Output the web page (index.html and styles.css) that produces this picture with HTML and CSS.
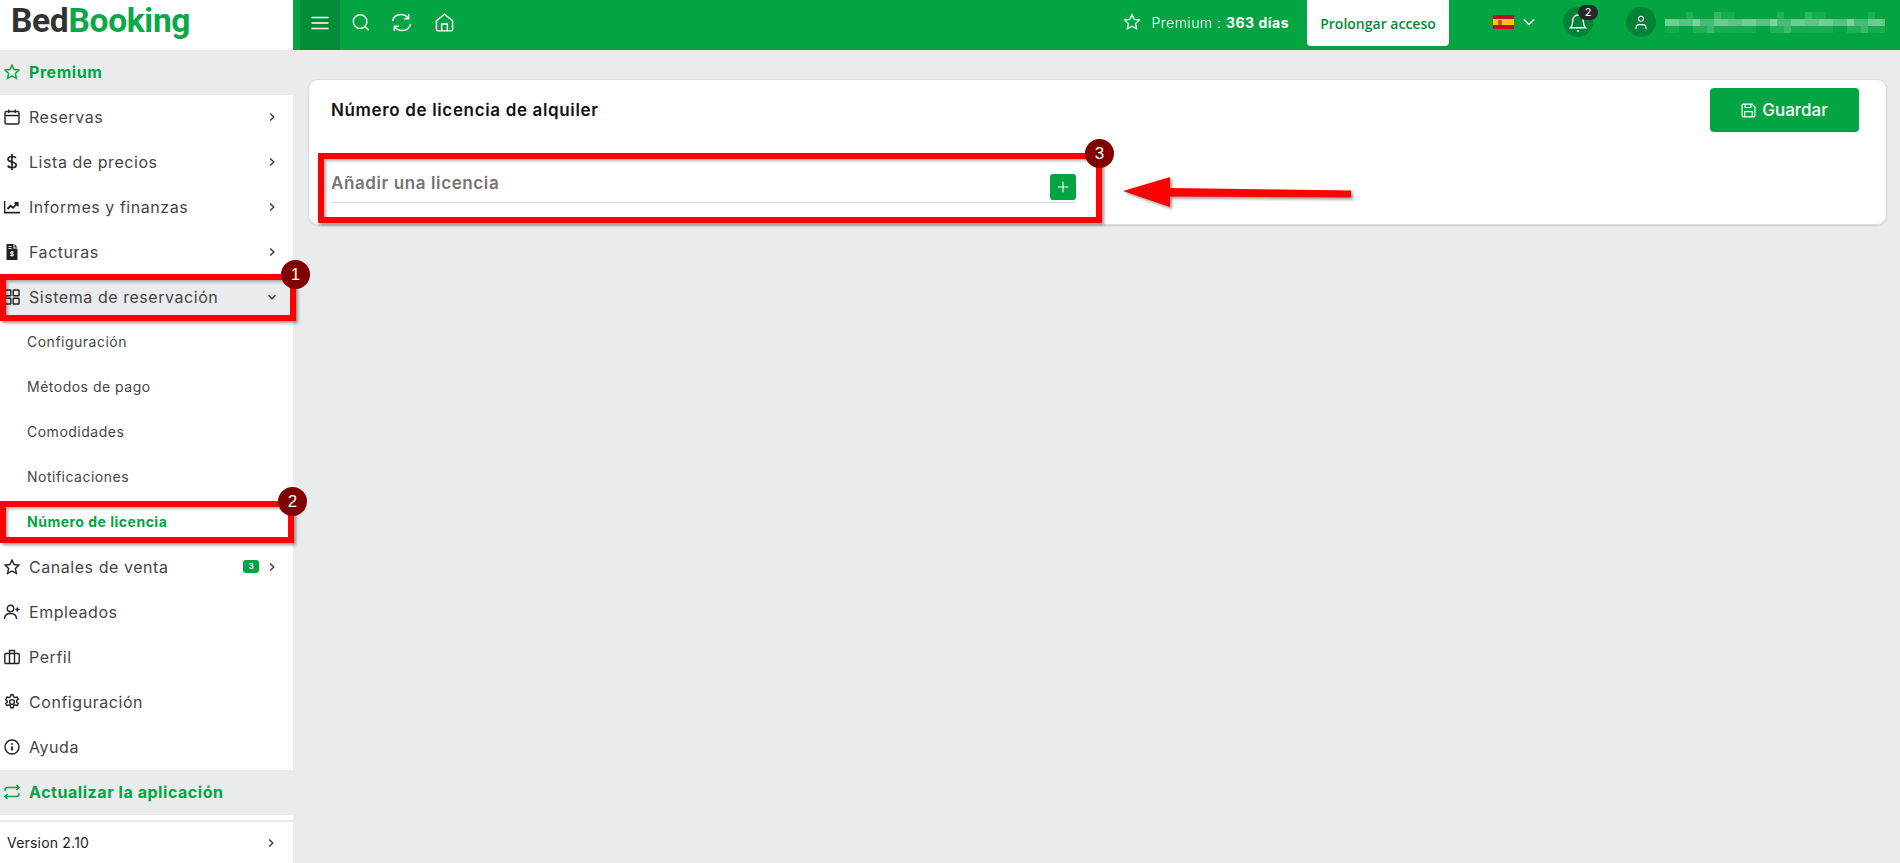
FILE: index.html
```html
<!DOCTYPE html>
<html lang="es">

<head>
    <meta charset="UTF-8">
    <title>BedBooking - Número de licencia</title>
    <link rel="stylesheet" href="styles.css">
</head>

<body>
    <div class="layout">
        <!-- Sidebar -->
        <aside class="sidebar">
            <div class="logo"><span class="logo-dark">Bed</span><span class="logo-green">Booking</span></div>

            <nav class="menu">
                <a class="menu-item menu-highlight">
                    <svg class="menu-icon" viewBox="0 0 16 16"><path d="M8 1l2.100 4.500 4.900.6-3.600 3.400 1 4.900L8 12l-4.400 2.400 1-4.900L1 6.100l4.900-.6z"/></svg>
                    <span class="menu-label">Premium</span>
                </a>
                <a class="menu-item">
                    <svg class="menu-icon" viewBox="0 0 16 16"><rect x="1" y="2.500" width="14" height="12.500" rx="1.500"/><path d="M1 6.500h14M4.800 .5v3.500M11.200 .5v3.500"/></svg>
                    <span class="menu-label">Reservas</span>
                    <svg class="chevron" viewBox="0 0 10 10"><path d="M3.200 1.500L6.800 5 3.200 8.500"/></svg>
                </a>
                <a class="menu-item">
                    <svg class="menu-icon" viewBox="0 0 16 16"><path stroke-width="1.700" d="M8 0v16M12 4.200C11.400 3 10 2.500 8 2.500c-2.300 0-4 .9-4 2.800S5.700 7.500 8 8s4.200 1 4.200 2.900-1.900 2.700-4.200 2.700c-2 0-3.700-.6-4.300-2"/></svg>
                    <span class="menu-label">Lista de precios</span>
                    <svg class="chevron" viewBox="0 0 10 10"><path d="M3.200 1.500L6.800 5 3.200 8.500"/></svg>
                </a>
                <a class="menu-item">
                    <svg class="menu-icon" viewBox="0 0 16 16"><path stroke-width="1.700" d="M.5 2v11.700h15.500"/><path stroke-width="1.900" d="M3.500 10l3-3.200 2.500 2 4-4.300M10.500 4h3.200v3.200"/></svg>
                    <span class="menu-label">Informes y finanzas</span>
                    <svg class="chevron" viewBox="0 0 10 10"><path d="M3.200 1.500L6.800 5 3.200 8.500"/></svg>
                </a>
                <a class="menu-item">
                    <svg class="menu-icon" viewBox="0 0 16 16"><path class="solid" d="M2.500 0h7v4.500h4V16h-11z"/><path class="solid" d="M10.500 0l3 3.500h-3z"/><path class="knock" d="M9.800 8H7.200c-1.100 0-1.100 1.800 0 1.800h1.600c1.100 0 1.100 1.800 0 1.800H6.200M8 7v5.600M4.500 2.500h3M4.500 4.500h3"/></svg>
                    <span class="menu-label">Facturas</span>
                    <svg class="chevron" viewBox="0 0 10 10"><path d="M3.200 1.500L6.800 5 3.200 8.500"/></svg>
                </a>
                <a class="menu-item menu-open">
                    <svg class="menu-icon" viewBox="0 0 16 16"><rect x="1" y="1" width="5.800" height="5.800" rx=".6"/><rect x="9.200" y="1" width="5.800" height="5.800" rx=".6"/><rect x="1" y="9.200" width="5.800" height="5.800" rx=".6"/><rect x="9.200" y="9.200" width="5.800" height="5.800" rx=".6"/></svg>
                    <span class="menu-label">Sistema de reservación</span>
                    <svg class="chevron" viewBox="0 0 10 10"><path d="M1.500 3.200L5 6.800l3.500-3.600"/></svg>
                </a>
                <a class="sub-item">Configuración</a>
                <a class="sub-item">Métodos de pago</a>
                <a class="sub-item">Comodidades</a>
                <a class="sub-item">Notificaciones</a>
                <a class="sub-item sub-active">Número de licencia</a>
                <a class="menu-item">
                    <svg class="menu-icon" viewBox="0 0 16 16"><path d="M8 1l2.100 4.500 4.900.6-3.600 3.400 1 4.900L8 12l-4.400 2.400 1-4.900L1 6.100l4.900-.6z"/></svg>
                    <span class="menu-label">Canales de venta</span>
                    <span class="menu-badge">3</span>
                    <svg class="chevron" viewBox="0 0 10 10"><path d="M3.200 1.500L6.800 5 3.200 8.500"/></svg>
                </a>
                <a class="menu-item">
                    <svg class="menu-icon" viewBox="0 0 16 16"><circle cx="6.500" cy="4.500" r="3.200"/><path d="M.5 15c0-3.500 2.400-5.500 6-5.500s6 2 6 5.500M13.300 3.500v4M11.300 5.500h4.200"/></svg>
                    <span class="menu-label">Empleados</span>
                </a>
                <a class="menu-item">
                    <svg class="menu-icon" viewBox="0 0 16 16"><rect x=".8" y="4.500" width="14.400" height="10" rx="1"/><path d="M5.500 14.500V1.500h5v13"/></svg>
                    <span class="menu-label">Perfil</span>
                </a>
                <a class="menu-item">
                    <svg class="menu-icon" viewBox="0 0 16 16"><circle cx="8" cy="8" r="2.400"/><path stroke-linejoin="round" d="M6.800 .8h2.400l.4 2.100 1.500.8 2-.7 1.200 2.100-1.600 1.300v1.800l1.600 1.300-1.200 2.100-2-.7-1.500.8-.4 2.100H6.800l-.4-2.100-1.500-.8-2 .7-1.200-2.100 1.600-1.300V7.100L1.700 5.800 2.900 3l2 .7 1.500-.8z"/></svg>
                    <span class="menu-label">Configuración</span>
                </a>
                <a class="menu-item">
                    <svg class="menu-icon" viewBox="0 0 16 16"><circle cx="8" cy="8" r="7"/><path stroke-width="1.800" d="M8 7.200v4.300M8 4.200v1.500"/></svg>
                    <span class="menu-label">Ayuda</span>
                </a>
                <a class="menu-item menu-highlight">
                    <svg class="menu-icon" viewBox="0 0 16 16"><path d="M1 7V6c0-1.500 1-2.500 2.500-2.500H15M12.500 1L15 3.500 12.500 6M15 9v1c0 1.500-1 2.500-2.500 2.500H1M3.500 10L1 12.500 3.500 15"/></svg>
                    <span class="menu-label">Actualizar la aplicación</span>
                </a>
            </nav>

            <div class="version">
                <span>Version 2.10</span>
                <svg class="chevron" viewBox="0 0 10 10"><path d="M3.200 1.500L6.800 5 3.200 8.500"/></svg>
            </div>
        </aside>

        <div class="main">
            <!-- Top bar -->
            <header class="topbar">
                <button class="burger">
                    <svg viewBox="0 0 18 14"><path d="M.5 1.500h17M.5 7h17M.5 12.500h17"/></svg>
                </button>
                <svg class="top-icon search" viewBox="0 0 20 20"><circle cx="9" cy="9" r="7.600"/><path d="M14.600 14.600l3.900 3.900"/></svg>
                <svg class="top-icon refresh" viewBox="0 0 22 20"><path d="M1.500 8.500C2.300 4.200 5.800 1.500 10.500 1.500c3.200 0 5.700 1.300 7.500 4M18.500 1v5h-5M20.500 11.500c-.8 4.300-4.300 7-9 7-3.200 0-5.700-1.300-7.500-4M3.500 19v-5h5"/></svg>
                <svg class="top-icon home" viewBox="0 0 20 20"><path d="M1.500 8.200L10 1.200l8.500 7v9.100a1.500 1.500 0 0 1-1.500 1.500H3a1.500 1.500 0 0 1-1.500-1.500z"/><path d="M7 18.800V11.500h6v7.300"/></svg>

                <div class="top-right">
                    <div class="premium-status">
                        <svg class="premium-star" viewBox="0 0 20 20"><path d="M10 1.800l2.500 5.300 5.700.7-4.200 4 1.100 5.800-5.100-2.900-5.100 2.900 1.100-5.800-4.200-4 5.700-.7z"/></svg>
                        <span>Premium : <b>363 días</b></span>
                    </div>
                    <button class="extend-btn">Prolongar acceso</button>
                    <div class="lang">
                        <span class="flag"><span class="flag-crest"></span></span>
                        <svg class="lang-chevron" viewBox="0 0 12 8"><path d="M.8 1.200L6 6.500l5.200-5.300"/></svg>
                    </div>
                    <div class="round-btn bell">
                        <svg viewBox="0 0 18 20"><path d="M1.500 15.300c1.500-1.500 2.200-3 2.200-6.300 0-4 2.300-6.500 5.300-6.500s5.300 2.500 5.300 6.500c0 3.300.7 4.800 2.200 6.300z"/><path d="M8 18.500h2"/></svg>
                        <span class="bell-count">2</span>
                    </div>
                    <div class="round-btn user">
                        <svg viewBox="0 0 16 18"><circle cx="8" cy="4.500" r="3"/><path d="M2 17v-1.500c0-2.500 1.500-4 4-4h4c2.500 0 4 1.500 4 4V17"/></svg>
                    </div>
                    <div class="blurred-name"></div>
                </div>
            </header>

            <!-- Content -->
            <main class="content">
                <section class="card">
                    <div class="card-head">
                        <h2 class="card-title">Número de licencia de alquiler</h2>
                        <button class="save-btn">
                            <svg viewBox="0 0 14 14"><path d="M1 2.200A1.200 1.200 0 0 1 2.200 1h8l2.800 2.800v8a1.200 1.200 0 0 1-1.200 1.200H2.200A1.200 1.200 0 0 1 1 11.800z"/><path d="M3.800 1v3.200h5.400V1M3.500 13V8h7v5"/></svg>
                            Guardar
                        </button>
                    </div>
                    <div class="license-row">
                        <span class="license-label">Añadir una licencia</span>
                        <button class="add-btn">
                            <svg viewBox="0 0 12 12"><path d="M6 .8v10.400M.8 6h10.400"/></svg>
                        </button>
                    </div>
                </section>
            </main>
        </div>
    </div>

    <!-- Annotations drawn over the screenshot -->
    <div class="mark mark-1"></div>
    <div class="mark mark-2"></div>
    <div class="mark mark-3"></div>
    <div class="step step-1">1</div>
    <div class="step step-2">2</div>
    <div class="step step-3">3</div>
    <svg class="arrow" viewBox="0 0 240 36" width="240" height="36"><path d="M0 14L47 0v11l181 2.500v7L47 19.500V30z"/></svg>
</body>

</html>
```

FILE: styles.css
```css
/* Base */
* {
    box-sizing: border-box;
}

html,
body {
    height: 100%;
}

body {
    margin: 0;
    overflow: hidden;
    font-family: 'Inter', 'Open Sans', sans-serif;
    color: #464646;
    background-color: #e9ebed;
}

button {
    font-family: inherit;
    border: 0;
    padding: 0;
}

.layout {
    display: flex;
    height: 863px;
}

/* Sidebar */
.sidebar {
    width: 293px;
    flex-shrink: 0;
    background-color: #fff;
}

.logo {
    height: 50px;
    padding-left: 11px;
    font-family: 'Roboto', sans-serif;
    font-size: 33.5px;
    font-weight: 700;
    line-height: 41px;
    letter-spacing: -0.3px;
}

.logo-dark {
    color: #333;
}

.logo-green {
    color: #0aa846;
}

.menu-item {
    display: flex;
    align-items: center;
    height: 45px;
    padding: 0 16px 2px 4px;
    font-size: 16px;
    letter-spacing: 0.55px;
}

.menu-icon {
    width: 16px;
    height: 16px;
    margin-right: 9px;
    flex-shrink: 0;
    fill: none;
    stroke: #222;
    stroke-width: 1.4;
}

.menu-label {
    flex-grow: 1;
}

.menu-highlight {
    background-color: #e9ebed;
    color: #02a542;
    font-weight: 700;
}

.menu-highlight .menu-icon {
    stroke: #02a542;
}

.menu-open {
    background-color: #e9ebed;
}

.chevron {
    width: 10px;
    height: 10px;
    flex-shrink: 0;
    fill: none;
    stroke: #333;
    stroke-width: 1.3;
}

.solid {
    fill: #222;
    stroke: none;
}

.knock {
    stroke: #fff;
    stroke-width: 1;
}

.menu-badge {
    width: 16px;
    height: 13px;
    margin-right: 8px;
    border-radius: 3px;
    background-color: #02a542;
    color: #fff;
    font-size: 8px;
    font-weight: 700;
    letter-spacing: 0;
    line-height: 13px;
    text-align: center;
}

.sub-item {
    display: block;
    height: 45px;
    padding-left: 27px;
    font-size: 14px;
    letter-spacing: 0.5px;
    line-height: 43px;
}

.sub-active {
    color: #02a542;
    font-weight: 700;
}

.version {
    display: flex;
    align-items: center;
    justify-content: space-between;
    height: 43px;
    margin-top: 5px;
    padding: 0 17px 0 7px;
    border-top: 2px solid #e9ebed;
    color: #222;
    font-size: 14px;
    letter-spacing: 0.2px;
}

/* Top bar */
.main {
    flex-grow: 1;
    min-width: 0;
}

.topbar {
    display: flex;
    align-items: center;
    height: 50px;
    padding-left: 7px;
    background-color: #02a542;
}

.burger {
    display: flex;
    align-items: center;
    justify-content: center;
    width: 40px;
    height: 50px;
    padding-bottom: 5px;
    margin-right: 12px;
    background-color: #028c37;
}

.burger svg {
    width: 18px;
    height: 14px;
    fill: none;
    stroke: #fff;
    stroke-width: 1.5;
}

.top-icon {
    height: 19px;
    margin-bottom: 5px;
    fill: none;
    stroke: #fff;
    stroke-width: 1.5;
}

.search {
    width: 18px;
    margin-right: 21px;
}

.refresh {
    width: 21px;
    margin-right: 23px;
}

.home {
    width: 19px;
}

.top-right {
    display: flex;
    align-items: center;
    height: 50px;
    margin-left: auto;
    padding-right: 15px;
    color: #fff;
}

.premium-status {
    display: flex;
    align-items: center;
    gap: 10px;
    margin: 0 18px 6px 0;
    font-size: 14px;
    font-weight: 300;
    letter-spacing: 0.5px;
}

.premium-status b {
    font-weight: 700;
}

.premium-star {
    width: 18px;
    height: 18px;
    fill: none;
    stroke: #fff;
    stroke-width: 1.4;
}

.extend-btn {
    width: 142px;
    height: 46px;
    margin: 0 44px 4px 0;
    border-radius: 0 0 4px 4px;
    background-color: #fff;
    color: #028c37;
    font-family: 'Open Sans', sans-serif;
    font-size: 14px;
    font-weight: 600;
}

.lang {
    display: flex;
    align-items: center;
    gap: 9px;
    margin: 0 28px 6px 0;
}

.flag {
    display: block;
    position: relative;
    width: 21px;
    height: 14px;
    background: linear-gradient(#c60b1e 25%, #ffc400 25%, #ffc400 75%, #c60b1e 75%);
}

.flag-crest {
    position: absolute;
    top: 5px;
    left: 5px;
    width: 4px;
    height: 5px;
    border-radius: 1px;
    background-color: #ad5a2c;
}

.lang-chevron {
    width: 12px;
    height: 8px;
    fill: none;
    stroke: #fff;
    stroke-width: 1.4;
}

.round-btn {
    display: flex;
    align-items: center;
    justify-content: center;
    position: relative;
    width: 30px;
    height: 30px;
    margin-bottom: 6px;
    border-radius: 50%;
    background-color: #028237;
}

.bell {
    margin-right: 33px;
}

.bell svg {
    width: 18px;
    height: 21px;
    fill: none;
    stroke: #fff;
    stroke-width: 1.4;
}

.user svg {
    width: 14px;
    height: 15px;
    fill: none;
    stroke: #fff;
    stroke-width: 1.3;
}

.bell-count {
    position: absolute;
    top: -2px;
    right: -5px;
    width: 20px;
    height: 15px;
    border-radius: 8px;
    background-color: #26282b;
    color: #fff;
    font-size: 11px;
    line-height: 15px;
    text-align: center;
}

/* pixelated user name, three rows of 7px cells */
.blurred-name {
    width: 220px;
    height: 21px;
    margin: 0 0 6px 9px;
    background-image:
        repeating-linear-gradient(90deg, #02a542 0 21px, #1db055 21px 28px, #02a542 28px 49px, #2fb668 49px 56px, #15ad50 56px 70px, #02a542 70px 91px),
        repeating-linear-gradient(90deg, #6fce92 0 14px, #55c381 14px 28px, #7dd29c 28px 35px, #46bd75 35px 49px, #6ccb90 49px 63px, #5cc583 63px 77px),
        repeating-linear-gradient(90deg, #14ac4f 0 14px, #02a542 14px 28px, #21b059 28px 42px, #38b96d 42px 49px, #14ac4f 49px 77px);
    background-size: 100% 7px;
    background-position: 0 0, 0 7px, 0 14px;
    background-repeat: no-repeat;
}

/* Content */
.content {
    padding: 29px 13px 0 15px;
}

.card {
    height: 146px;
    padding: 0 27px 0 22px;
    border: 1px solid #dcdee0;
    border-radius: 10px;
    background-color: #fff;
    box-shadow: 0 1px 2px rgba(0, 0, 0, 0.12);
}

.card-head {
    display: flex;
    align-items: center;
    justify-content: space-between;
    height: 72px;
    padding: 8px 0 20px;
}

.card-title {
    margin: 0;
    color: #111;
    font-size: 17px;
    font-weight: 600;
    letter-spacing: 0.65px;
}

.save-btn {
    display: flex;
    align-items: center;
    justify-content: center;
    gap: 6px;
    width: 149px;
    height: 44px;
    border-radius: 4px;
    background-color: #02a542;
    color: #fff;
    font-size: 17px;
    font-weight: 500;
}

.save-btn svg {
    width: 15px;
    height: 15px;
    fill: none;
    stroke: #fff;
    stroke-width: 1.1;
}

.license-row {
    display: flex;
    align-items: flex-start;
    justify-content: space-between;
    width: 745px;
    height: 37px;
    margin-top: 14px;
    padding-top: 5px;
    border-bottom: 1px solid #dcdcdc;
}

.license-label {
    color: #757575;
    font-size: 17px;
    font-weight: 600;
    letter-spacing: 0.6px;
    line-height: 24px;
}

.add-btn {
    display: flex;
    align-items: center;
    justify-content: center;
    width: 26px;
    height: 26px;
    margin-top: 3px;
    border-radius: 3px;
    background-color: #02a542;
}

.add-btn svg {
    width: 12px;
    height: 12px;
    fill: none;
    stroke: #fff;
    stroke-width: 1.1;
}

/* Annotations */
.mark {
    position: absolute;
    border: 6px solid #f00;
    box-shadow: 2px 2px 3px rgba(0, 0, 0, 0.4), inset 2px 2px 3px rgba(0, 0, 0, 0.3);
}

.mark-1 {
    top: 274px;
    left: 0;
    width: 296px;
    height: 47px;
}

.mark-2 {
    top: 501px;
    left: 0;
    width: 294px;
    height: 42px;
}

.mark-3 {
    top: 153px;
    left: 318px;
    width: 784px;
    height: 70px;
}

.step {
    position: absolute;
    width: 29px;
    height: 29px;
    border-radius: 50%;
    background-color: #800000;
    color: #fff;
    font-family: 'Liberation Sans', sans-serif;
    font-size: 17px;
    line-height: 29px;
    text-align: center;
}

.step-1 {
    top: 260px;
    left: 281px;
}

.step-2 {
    top: 487px;
    left: 278px;
}

.step-3 {
    top: 139px;
    left: 1085px;
}

.arrow {
    position: absolute;
    top: 177px;
    left: 1123px;
    fill: #f00;
    filter: drop-shadow(2px 2px 1.5px rgba(0, 0, 0, 0.4));
}
```
